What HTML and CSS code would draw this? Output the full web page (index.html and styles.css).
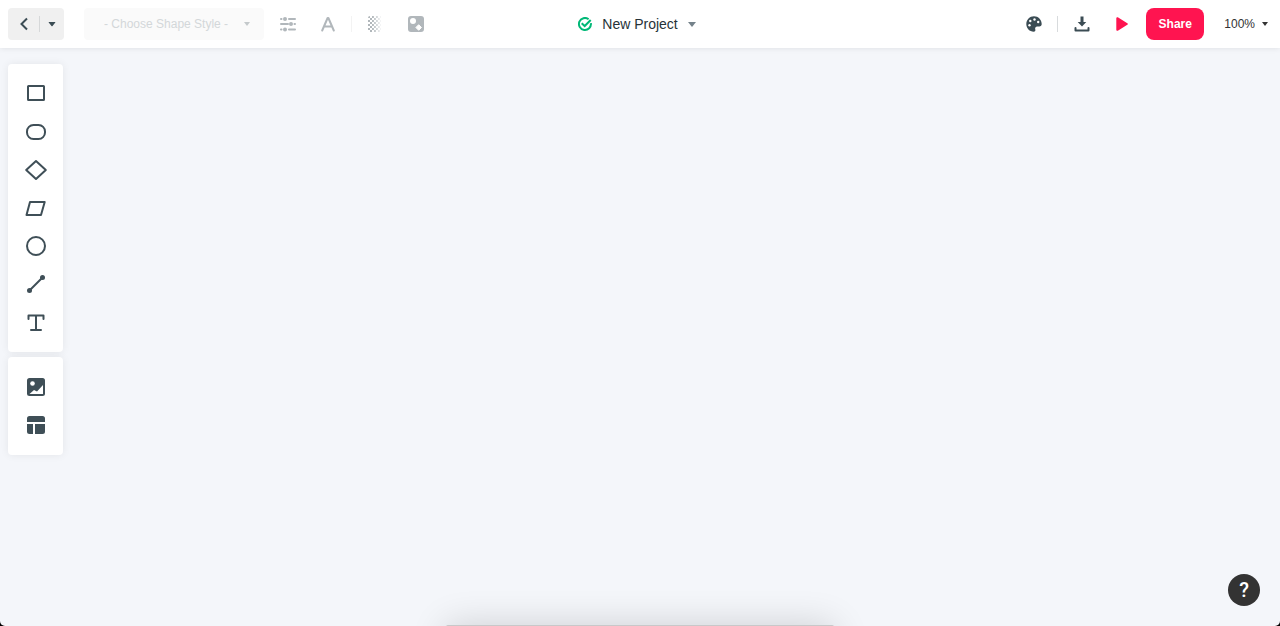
FILE: index.html
```html
<!DOCTYPE html>
<html lang="en">
<head>
    <meta charset="UTF-8">
    <meta name="viewport" content="width=device-width, initial-scale=1.0">
    <title>New Project</title>
    <link rel="stylesheet" href="styles.css">
</head>
<body>
    <div class="app">
        <header class="topbar">
            <div class="topbar-left">
                <div class="back-group">
                    <button type="button" class="back" aria-label="Back">
                        <svg width="8" height="14" viewBox="0 0 8 14"><path d="M7 1.5L1.5 7L7 12.5" fill="none" stroke="currentColor" stroke-width="2"/></svg>
                    </button>
                    <button type="button" class="back-menu" aria-label="Menu">
                        <svg width="8" height="5" viewBox="0 0 8 5"><path d="M1 0h6q.8 0 .3.600L4.500 4q-.5.6-1 0L.7.600Q.2 0 1 0z" fill="currentColor"/></svg>
                    </button>
                </div>
                <div class="style-picker">
                    <select aria-label="Shape style" disabled>
                        <option>- Choose Shape Style -</option>
                    </select>
                    <svg class="caret" width="6" height="4" viewBox="0 0 6 4"><path d="M0 0h6L3 4z" fill="currentColor"/></svg>
                </div>
                <div class="format-tools">
                    <button type="button" class="icon-btn" aria-label="Options" disabled>
                        <svg width="16" height="16" viewBox="0 0 16 16">
                            <path d="M1 3h.5M9 3h6M1 8h7M14.500 8h.5M1 13.500h.5M9 13.500h6" fill="none" stroke="currentColor" stroke-width="2" stroke-linecap="round"/>
                            <g fill="currentColor"><circle cx="5" cy="3" r="2"/><circle cx="11" cy="8" r="2"/><circle cx="5" cy="13.500" r="2"/></g>
                        </svg>
                    </button>
                    <button type="button" class="icon-btn" aria-label="Text style" disabled>
                        <svg width="14" height="16" viewBox="0 0 14 16"><path d="M1.200 14.500L6.600 2h.8L12.800 14.500M3.200 10.500h7.600" fill="none" stroke="currentColor" stroke-width="2" stroke-linecap="round" stroke-linejoin="round"/></svg>
                    </button>
                    <span class="divider light"></span>
                    <button type="button" class="icon-btn" aria-label="Opacity" disabled>
                        <svg width="13" height="16" viewBox="0 0 13 16">
                            <defs>
                                <pattern id="checks" width="4" height="4" patternUnits="userSpaceOnUse">
                                    <path d="M0 0h2v2H0zM2 2h2v2H2z" fill="currentColor"/>
                                </pattern>
                                <linearGradient id="fade">
                                    <stop offset="0.3" stop-color="#fff"/>
                                    <stop offset="1" stop-color="#fff" stop-opacity="0.1"/>
                                </linearGradient>
                                <mask id="fadeMask"><path d="M0 0h13v16H0z" fill="url(#fade)"/></mask>
                            </defs>
                            <path d="M0 2a2 2 0 0 1 2-2h11v16H2a2 2 0 0 1-2-2z" fill="url(#checks)" mask="url(#fadeMask)"/>
                        </svg>
                    </button>
                    <button type="button" class="icon-btn replace" aria-label="Replace shape" disabled>
                        <svg width="16" height="16" viewBox="0 0 16 16">
                            <rect width="16" height="16" rx="3" fill="currentColor"/>
                            <circle cx="5" cy="5" r="3" fill="#fff"/>
                            <path d="M10.700 8.700L13.500 11.500L10.700 14.300L7.900 11.500z" fill="#fff" stroke="#fff" stroke-linejoin="round"/>
                        </svg>
                    </button>
                </div>
            </div>

            <button type="button" class="project">
                <svg width="14" height="14" viewBox="0 0 14 14" fill="none" stroke="#00b877" stroke-width="2">
                    <path d="M12.900 6.200A6 6 0 1 1 10.600 2.200"/>
                    <path d="M3.700 6.200l3 2.800L12.700 3"/>
                </svg>
                <span>New Project</span>
                <svg class="project-caret" width="8" height="5" viewBox="0 0 8 5"><path d="M0 0h8L4 5z" fill="currentColor"/></svg>
            </button>

            <div class="topbar-right">
                <button type="button" class="icon-btn" aria-label="Theme">
                    <svg width="16" height="16" viewBox="0 0 16 16">
                        <path d="M8 .3C3.700.3.3 3.700.3 8s3.300 7.700 7.400 7.700c1.400 0 2-1 1.600-2.200-.6-1.700.2-3.100 2-3.100h2c1.500 0 2.400-.9 2.400-2.400C15.700 3.700 12.300.3 8 .3z" fill="currentColor"/>
                        <g fill="#fff"><circle cx="8.500" cy="3.500" r="1.200"/><circle cx="4.300" cy="5" r="1.200"/><circle cx="3.500" cy="9.300" r="1.200"/><circle cx="12.200" cy="6" r="1.200"/></g>
                    </svg>
                </button>
                <span class="divider"></span>
                <button type="button" class="icon-btn" aria-label="Download">
                    <svg width="16" height="16" viewBox="0 0 16 16">
                        <path d="M6.500 .5h3V6h2.800L8 10.500 3.700 6h2.800z" fill="currentColor"/>
                        <path d="M1.500 12v2.500h13V12" fill="none" stroke="currentColor" stroke-width="2" stroke-linecap="round" stroke-linejoin="round"/>
                    </svg>
                </button>
                <button type="button" class="icon-btn play" aria-label="Present">
                    <svg width="12" height="14" viewBox="0 0 12 14"><path d="M1.300 1.200L10.800 7L1.300 12.800z" fill="currentColor" stroke="currentColor" stroke-width="2" stroke-linejoin="round"/></svg>
                </button>
                <button type="button" class="share">Share</button>
                <button type="button" class="zoom">
                    <span>100%</span>
                    <svg width="6" height="4" viewBox="0 0 6 4"><path d="M0 0h6L3 4z" fill="currentColor"/></svg>
                </button>
            </div>
        </header>

        <main class="workspace">
            <div class="toolbox shapes">
                <button type="button" class="tool" aria-label="Rectangle">
                    <svg viewBox="0 0 24 24"><rect x="4" y="4" width="16" height="14" rx="0.500"/></svg>
                </button>
                <button type="button" class="tool" aria-label="Rounded rectangle">
                    <svg viewBox="0 0 24 24"><rect x="3" y="5" width="18" height="14" rx="6.500"/></svg>
                </button>
                <button type="button" class="tool" aria-label="Diamond">
                    <svg viewBox="0 0 24 24"><path d="M12 3L21.800 12L12 21L2.200 12z"/></svg>
                </button>
                <button type="button" class="tool" aria-label="Parallelogram">
                    <svg viewBox="0 0 24 24"><path d="M6 6H20.700L17 19H2.500z"/></svg>
                </button>
                <button type="button" class="tool" aria-label="Circle">
                    <svg viewBox="0 0 24 24"><circle cx="12" cy="12" r="9"/></svg>
                </button>
                <button type="button" class="tool" aria-label="Line">
                    <svg viewBox="0 0 24 24"><path d="M5.500 18.500l13-13"/><circle class="solid" cx="5.500" cy="18.500" r="2.500"/><circle class="solid" cx="18.500" cy="5.500" r="2.500"/></svg>
                </button>
                <button type="button" class="tool" aria-label="Text">
                    <svg viewBox="0 0 24 24"><path d="M4.500 9V5.500h15V9M12 5.500V20M7 20h10"/></svg>
                </button>
            </div>
            <div class="toolbox media">
                <button type="button" class="tool" aria-label="Image">
                    <svg viewBox="0 0 24 24">
                        <rect class="solid" x="3" y="3" width="18" height="18" rx="2.500"/>
                        <circle class="cutout" cx="8.500" cy="8.500" r="2.300"/>
                        <path class="cutout" d="M5.500 19L10 15L13 16.500L19 10V19z"/>
                    </svg>
                </button>
                <button type="button" class="tool" aria-label="Layout">
                    <svg viewBox="0 0 24 24"><path class="solid" d="M5.500 3h13A2.500 2.500 0 0 1 21 5.500V9H3V5.500A2.500 2.500 0 0 1 5.500 3zM3 11h6v10H5.500A2.500 2.500 0 0 1 3 18.500zM11 11h10v7.500a2.500 2.500 0 0 1-2.500 2.500H11z"/></svg>
                </button>
            </div>
        </main>

        <button type="button" class="help" aria-label="Help">?</button>
        <div class="tray"></div>
    </div>
</body>
</html>
```
FILE: styles.css
```css
* {
    box-sizing: border-box;
}

body {
    margin: 0;
    background: #000;
    font-family: "Liberation Sans", Arial, sans-serif;
    color: #3b4c54;
}

button,
select {
    margin: 0;
    padding: 0;
    border: none;
    background: none;
    font-family: inherit;
    color: inherit;
    cursor: pointer;
}

svg {
    display: block;
    flex: none;
}

.app {
    position: relative;
    display: flex;
    flex-direction: column;
    height: 100vh;
    overflow: hidden;
    background: #f4f6fa;
    border-radius: 0 0 5px 5px;
}

/* Top bar */
.topbar {
    display: grid;
    grid-template-columns: 1fr auto 1fr;
    align-items: center;
    padding: 8px;
    background: #fff;
    box-shadow: 0 0 6px rgba(0, 0, 0, 0.1);
}

.topbar-left,
.topbar-right,
.format-tools {
    display: flex;
    align-items: center;
}

.topbar-right {
    justify-content: flex-end;
}

.back-group {
    display: flex;
    align-items: center;
    width: 56px;
    height: 32px;
    margin-right: 20px;
    background: #f0f0f0;
    border-radius: 4px;
}

.back,
.back-menu {
    display: flex;
    align-items: center;
    justify-content: center;
    height: 16px;
}

.back {
    width: 32px;
    border-right: 1px solid #d6d8d9;
}

.back-menu {
    flex: 1;
}

.style-picker {
    position: relative;
    width: 180px;
}

.style-picker select {
    appearance: none;
    width: 100%;
    height: 32px;
    padding: 0 20px;
    background: #fafafa;
    border-radius: 4px;
    font-size: 12px;
    color: #d3d7d9;
    opacity: 1;
}

.style-picker .caret {
    position: absolute;
    top: 14px;
    right: 14px;
    color: #c4c9cb;
    pointer-events: none;
}

.format-tools {
    margin-left: 4px;
}

.icon-btn {
    display: flex;
    align-items: center;
    justify-content: center;
    width: 40px;
    height: 32px;
}

.icon-btn:disabled {
    color: #b1b7bb;
}

.replace {
    margin-left: 2px;
}

.divider {
    width: 1px;
    height: 16px;
    margin: 0 4px 0 3px;
    background: #d8dbdd;
}

.divider.light {
    margin: 0 2px 0 3px;
    background: #f3f3f3;
}

.project {
    display: flex;
    align-items: center;
    gap: 10px;
    margin-right: 6px;
    font-size: 14px;
    color: #263238;
}

.project-caret {
    color: #74828a;
}

.play {
    color: #ff1450;
}

.share {
    min-width: 58px;
    height: 32px;
    margin-left: 4px;
    padding: 0 12px;
    background: #ff1450;
    border-radius: 8px;
    font-size: 12px;
    font-weight: bold;
    color: #fff;
}

.zoom {
    display: flex;
    align-items: center;
    gap: 7px;
    margin: 0 4px 0 20px;
    font-size: 12px;
    color: #333;
}

/* Tool panels */
.workspace {
    flex: 1;
    display: flex;
    flex-direction: column;
    align-items: flex-start;
    gap: 5px;
    padding: 16px 8px;
}

.toolbox {
    display: flex;
    flex-direction: column;
    width: 55px;
    padding: 11px 0;
    background: #fff;
    border-radius: 4px;
    box-shadow: 0 0 8px rgba(0, 0, 0, 0.07);
}

.tool {
    display: flex;
    align-items: center;
    justify-content: center;
    height: 38px;
}

.tool svg {
    width: 24px;
    height: 24px;
    fill: none;
    stroke: #3f4f57;
    stroke-width: 2;
    stroke-linecap: round;
    stroke-linejoin: round;
}

.tool .solid {
    fill: #3f4f57;
    stroke: none;
}

.tool .cutout {
    fill: #fff;
    stroke: none;
}

/* Floating items */
.help {
    position: absolute;
    right: 20px;
    bottom: 20px;
    width: 32px;
    height: 32px;
    border-radius: 50%;
    background: #333;
    font-family: Roboto, sans-serif;
    font-size: 20px;
    font-weight: 500;
    color: #fff;
}

/* Collapsed tray, only its top edge and shadow show */
.tray {
    position: absolute;
    top: calc(100% - 1px);
    left: 50%;
    width: 388px;
    height: 40px;
    transform: translateX(-50%);
    background: #c8c8c9;
    border-radius: 2px;
    box-shadow: 0 0 36px rgba(0, 0, 0, 0.16);
}
```
